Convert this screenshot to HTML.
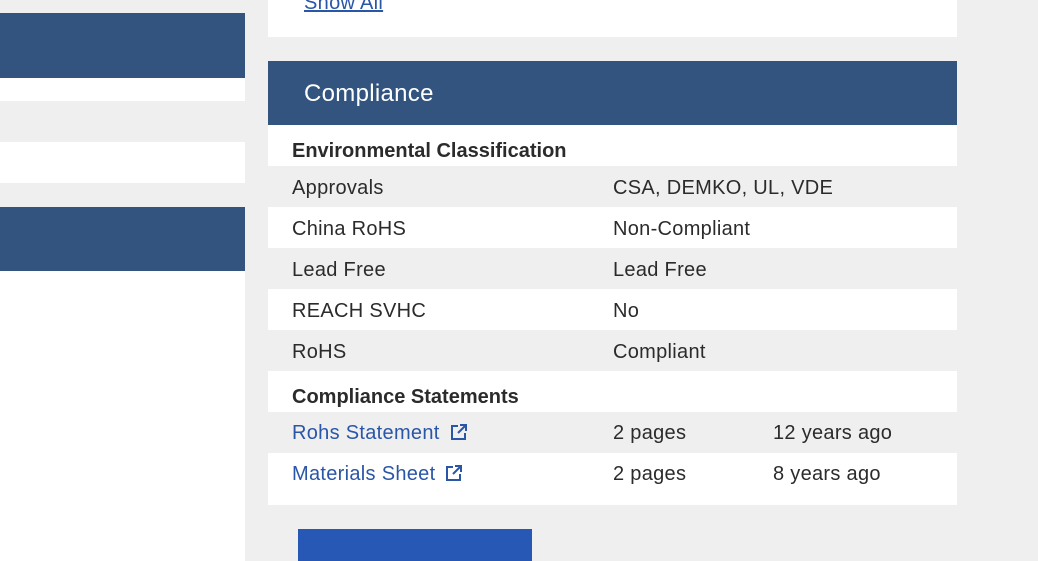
<!DOCTYPE html>
<html><head><style>
*{margin:0;padding:0;box-sizing:border-box}
body{width:1038px;height:561px;overflow:hidden;background:#efefef;position:relative;font-family:"Liberation Sans",sans-serif;color:#2b2b2b}
.a{position:absolute}
.row{position:absolute;left:268px;width:689px;height:41px;font-size:20px;line-height:45px;letter-spacing:0.3px}
.row span{position:absolute}
.c1{left:24px}.c2{left:345px}.c3{left:505px}
.w{background:#fff}.g{background:#efefef}
.b{font-weight:bold;letter-spacing:0}
.lk{color:#2a56a8}
svg{vertical-align:-2px;margin-left:10px}
</style></head><body>
<div class="a" style="left:0;top:13px;width:245px;height:65px;background:#32547f"></div>
<div class="a" style="left:0;top:78px;width:245px;height:23px;background:#fff"></div>
<div class="a" style="left:0;top:142px;width:245px;height:41px;background:#fff"></div>
<div class="a" style="left:0;top:207px;width:245px;height:64px;background:#32547f"></div>
<div class="a" style="left:0;top:271px;width:245px;height:290px;background:#fff"></div>

<div class="a" style="left:268px;top:0;width:689px;height:37px;background:#fff"></div>
<div class="a" style="left:304px;top:-8px;font-size:20px;color:#2a56a8;text-decoration:underline;letter-spacing:0.3px">Show All</div>
<div class="a" style="left:268px;top:61px;width:689px;height:64px;background:#32547f;color:#fff;font-size:24px;line-height:66px;padding-left:36px;letter-spacing:0.3px">Compliance</div>

<div class="row w b" style="top:125px;line-height:52px"><span class="c1">Environmental Classification</span></div>
<div class="row g" style="top:166px"><span class="c1">Approvals</span><span class="c2">CSA, DEMKO, UL, VDE</span></div>
<div class="row w" style="top:207px"><span class="c1">China RoHS</span><span class="c2">Non-Compliant</span></div>
<div class="row g" style="top:248px"><span class="c1">Lead Free</span><span class="c2">Lead Free</span></div>
<div class="row w" style="top:289px"><span class="c1">REACH SVHC</span><span class="c2">No</span></div>
<div class="row g" style="top:330px"><span class="c1">RoHS</span><span class="c2">Compliant</span></div>
<div class="row w b" style="top:371px;line-height:52px;height:41px"><span class="c1">Compliance Statements</span></div>
<div class="row g" style="top:412px;line-height:42px"><span class="c1 lk">Rohs Statement<svg width="18" height="18" viewBox="0 0 18 18" fill="none" stroke="#2a56a8" stroke-width="2"><path d="M8 3H2v13h13v-6M10 2h6v6M16 2L8 10"/></svg></span><span class="c2">2 pages</span><span class="c3">12 years ago</span></div>
<div class="row w" style="top:453px;line-height:42px"><span class="c1 lk">Materials Sheet<svg width="18" height="18" viewBox="0 0 18 18" fill="none" stroke="#2a56a8" stroke-width="2"><path d="M8 3H2v13h13v-6M10 2h6v6M16 2L8 10"/></svg></span><span class="c2">2 pages</span><span class="c3">8 years ago</span></div>
<div class="a" style="left:268px;top:494px;width:689px;height:11px;background:#fff"></div>
<div class="a" style="left:298px;top:529px;width:234px;height:32px;background:#2858b5"></div>
</body></html>
